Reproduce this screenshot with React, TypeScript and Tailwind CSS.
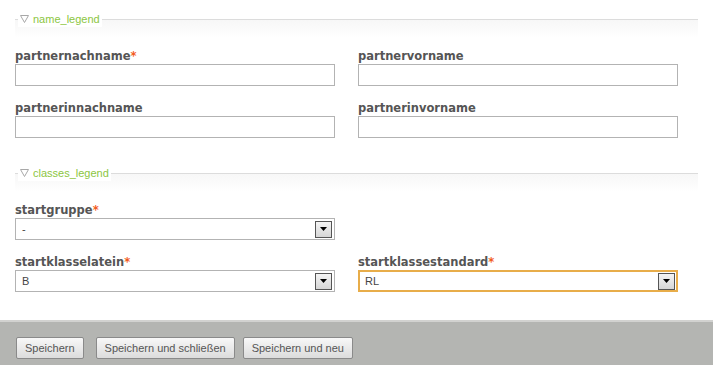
import React from 'react';

const labelFont = { fontFamily: '"DejaVu Sans", Verdana, sans-serif' };
const uiFont = { fontFamily: '"Liberation Sans", Arial, sans-serif' };

const Legend: React.FC<{ title: string }> = ({ title }) => (
  <div className="mx-[15px]">
    <div className="relative h-[27px]">
      <div className="absolute left-0 right-0 top-[8px] h-px bg-[#dcdcdc]" />
      <div className="absolute left-0 right-0 top-[9px] bottom-0 bg-gradient-to-b from-[#f7f7f7] to-white" />
      <div
        className="absolute left-[3px] top-0 bg-white px-[2px] text-[11px] leading-[16px] text-[#8cc63f] flex items-center gap-[4px]"
        style={uiFont}
      >
        <svg width="9" height="8" viewBox="0 0 9 8">
          <path d="M0.5 0.5 H8.5 L4.5 7.5 Z" fill="none" stroke="#a8a8a8" strokeWidth="1" />
        </svg>
        {title}
      </div>
    </div>
  </div>
);

const Label: React.FC<{ text: string; req?: boolean }> = ({ text, req }) => (
  <div className="text-[11.5px] font-bold text-[#555] leading-[13px] h-[14px]" style={labelFont}>
    {text}
    {req && <span className="text-[#f25c1e]">*</span>}
  </div>
);

const TextField: React.FC<{ label: string; req?: boolean }> = ({ label, req }) => (
  <div className="w-[320px]">
    <Label text={label} req={req} />
    <div className="h-[22px] border border-[#b3b3b3] bg-white" />
  </div>
);

const SelectField: React.FC<{ label: string; value: string; req?: boolean; focus?: boolean }> = ({
  label,
  value,
  req,
  focus,
}) => (
  <div className="w-[320px]">
    <Label text={label} req={req} />
    <div
      className={
        'h-[22px] bg-white flex items-center justify-between ' +
        (focus ? 'border-2 border-[#e8ad4a] pl-[5px] pr-[1px]' : 'border border-[#b3b3b3] pl-[6px] pr-[2px]')
      }
    >
      <span className="text-[11px] text-[#444]" style={uiFont}>
        {value}
      </span>
      <div className="w-[17px] h-[17px] border border-[#555] bg-gradient-to-b from-[#f4f4f4] to-[#d6d6d6] flex items-center justify-center">
        <svg width="7" height="4" viewBox="0 0 7 4">
          <path d="M0 0 H7 L3.5 4 Z" fill="#000" />
        </svg>
      </div>
    </div>
  </div>
);

const Btn: React.FC<{ text: string; className?: string }> = ({ text, className }) => (
  <button
    className={
      'h-[22px] px-[8px] rounded-[2px] border border-[#8a8a8a] bg-gradient-to-b from-[#f8f8f8] to-[#dcdcdc] text-[11px] text-[#555] ' +
      (className ?? '')
    }
    style={uiFont}
  >
    {text}
  </button>
);

export default function App() {
  return (
    <div className="w-[713px] h-[365px] bg-white flex flex-col overflow-hidden">
      <div className="pt-[11px] flex-1">
        <Legend title="name_legend" />
        <div className="mx-[15px] mt-[12px] flex flex-col gap-[16px]">
          <div className="flex gap-[23px]">
            <TextField label="partnernachname" req />
            <TextField label="partnervorname" />
          </div>
          <div className="flex gap-[23px]">
            <TextField label="partnerinnachname" />
            <TextField label="partnerinvorname" />
          </div>
        </div>
        <div className="mt-[27px]">
          <Legend title="classes_legend" />
        </div>
        <div className="mx-[15px] mt-[12px] flex flex-col gap-[16px]">
          <div className="flex">
            <SelectField label="startgruppe" value="-" req />
          </div>
          <div className="flex gap-[23px]">
            <SelectField label="startklasselatein" value="B" req />
            <SelectField label="startklassestandard" value="RL" req focus />
          </div>
        </div>
      </div>
      <div className="h-[45px] border-t-2 border-[#d2d2d0] bg-[#b4b5b2] flex items-start pl-[16px] pt-[15px]">
        <Btn text="Speichern" />
        <Btn text="Speichern und schließen" className="ml-[12px]" />
        <Btn text="Speichern und neu" className="ml-[8px]" />
      </div>
    </div>
  );
}
